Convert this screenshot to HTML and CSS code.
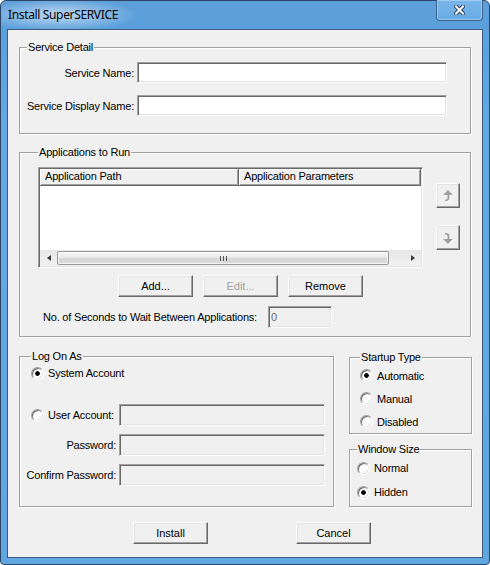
FILE: index.html
```html
<!DOCTYPE html>
<html lang="en">

<head>
    <meta charset="UTF-8">
    <title>Install SuperSERVICE</title>
    <link rel="stylesheet" href="styles.css">
</head>

<body>
    <div class="window">
        <div class="titlebar">
            <span class="title">Install SuperSERVICE</span>
            <button class="close-btn" title="Close">
                <svg width="11" height="10" viewBox="0 0 11 10">
                    <path d="M2 1.5 L9 8.5 M9 1.5 L2 8.5" stroke="#2b3f58" stroke-width="4" stroke-linecap="square" />
                    <path d="M2 1.5 L9 8.5 M9 1.5 L2 8.5" stroke="#fff" stroke-width="2" stroke-linecap="square" />
                </svg>
            </button>
        </div>

        <div class="client">
            <!-- Service name and display name -->
            <fieldset class="group group-detail">
                <legend>Service Detail</legend>
                <div class="detail-grid">
                    <label for="svc-name" class="field-label">Service Name:</label>
                    <input type="text" id="svc-name" class="edit">
                    <label for="svc-display" class="field-label">Service Display Name:</label>
                    <input type="text" id="svc-display" class="edit">
                </div>
            </fieldset>

            <!-- Application list -->
            <fieldset class="group group-apps">
                <legend>Applications to Run</legend>
                <div class="apps-row">
                    <div class="listview">
                        <div class="lv-header">
                            <span class="lv-col col-path">Application Path</span>
                            <span class="lv-col col-params">Application Parameters</span>
                        </div>
                        <div class="lv-body"></div>
                        <div class="hscroll">
                            <span class="sb-arrow sb-left"></span>
                            <span class="sb-track">
                                <span class="sb-thumb"><span class="sb-grip"></span></span>
                            </span>
                            <span class="sb-arrow sb-right"></span>
                        </div>
                    </div>
                    <div class="move-btns">
                        <button class="btn btn-move" disabled>
                            <svg width="14" height="14" viewBox="0 0 14 14">
                                <path transform="translate(1 1)" fill="#fff" d="M7 1 L12 6 L8.5 6 L8.5 9 Q8.5 12 5 12 L4 12 L4 10.5 L5 10.5 Q6.5 10.5 6.5 9 L6.5 6 L2 6 Z" />
                                <path fill="#a0a0a0" d="M7 1 L12 6 L8.5 6 L8.5 9 Q8.5 12 5 12 L4 12 L4 10.5 L5 10.5 Q6.5 10.5 6.5 9 L6.5 6 L2 6 Z" />
                            </svg>
                        </button>
                        <button class="btn btn-move" disabled>
                            <svg width="14" height="14" viewBox="0 0 14 14">
                                <path transform="translate(1 1)" fill="#fff" d="M7 13 L12 8 L8.5 8 L8.5 5 Q8.5 2 5 2 L4 2 L4 3.5 L5 3.5 Q6.5 3.5 6.5 5 L6.5 8 L2 8 Z" />
                                <path fill="#a0a0a0" d="M7 13 L12 8 L8.5 8 L8.5 5 Q8.5 2 5 2 L4 2 L4 3.5 L5 3.5 Q6.5 3.5 6.5 5 L6.5 8 L2 8 Z" />
                            </svg>
                        </button>
                    </div>
                </div>
                <div class="apps-actions">
                    <button class="btn">Add...</button>
                    <button class="btn" disabled>Edit...</button>
                    <button class="btn">Remove</button>
                </div>
                <div class="wait-row">
                    <label for="wait-secs" class="wait-label">No. of Seconds to Wait Between Applications:</label>
                    <input type="text" id="wait-secs" class="edit edit-wait" value="0" disabled>
                </div>
            </fieldset>

            <div class="bottom-grid">
                <!-- Account the service runs under -->
                <fieldset class="group group-logon">
                    <legend>Log On As</legend>
                    <label class="radio-row system-row">
                        <input type="radio" name="logon" class="radio" checked>
                        <span>System Account</span>
                    </label>
                    <div class="logon-grid">
                        <label class="radio-row">
                            <input type="radio" name="logon" class="radio">
                            <span>User Account:</span>
                        </label>
                        <input type="text" class="edit" disabled>
                        <label class="field-label">Password:</label>
                        <input type="password" class="edit" disabled>
                        <label class="field-label">Confirm Password:</label>
                        <input type="password" class="edit" disabled>
                    </div>
                </fieldset>

                <div class="side-col">
                    <fieldset class="group group-startup">
                        <legend>Startup Type</legend>
                        <label class="radio-row"><input type="radio" name="startup" class="radio" checked><span>Automatic</span></label>
                        <label class="radio-row"><input type="radio" name="startup" class="radio"><span>Manual</span></label>
                        <label class="radio-row"><input type="radio" name="startup" class="radio"><span>Disabled</span></label>
                    </fieldset>
                    <fieldset class="group group-winsize">
                        <legend>Window Size</legend>
                        <label class="radio-row"><input type="radio" name="winsize" class="radio"><span>Normal</span></label>
                        <label class="radio-row"><input type="radio" name="winsize" class="radio" checked><span>Hidden</span></label>
                    </fieldset>
                </div>
            </div>

            <div class="dialog-actions">
                <button class="btn">Install</button>
                <button class="btn">Cancel</button>
            </div>
        </div>
    </div>
</body>

</html>
```

FILE: styles.css
```css
* {
    box-sizing: border-box;
}

body {
    margin: 0;
    background-color: #FFFFFF;
    font-family: "Liberation Sans", Arial, sans-serif;
    font-size: 11px;
    letter-spacing: -0.2px;
    color: #000000;
}

/* window frame */
.window {
    width: 490px;
    height: 565px;
    border: 1px solid #2a4566;
    border-radius: 6px 6px 4px 4px;
    background: linear-gradient(to bottom, #5e9fd9 0, #5aa0dc 28px, #62a9e4 120px, #60a7e2 100%);
    padding: 0 6px 6px;
    display: flex;
    flex-direction: column;
}

.titlebar {
    height: 28px;
    display: flex;
    justify-content: space-between;
    align-items: flex-start;
    background: radial-gradient(ellipse 80px 16px at 58px 14px, rgba(255, 255, 255, 0.6), rgba(255, 255, 255, 0));
    margin: 0 -6px;
    padding: 0 0 0 7px;
}

.title {
    font-family: "Noto Sans", "Open Sans", sans-serif;
    font-size: 12px;
    letter-spacing: -0.35px;
    line-height: 16px;
    margin-top: 6px;
}

.close-btn {
    width: 47px;
    height: 21px;
    margin: -1px 6px 0 0;
    padding: 0;
    border: 1px solid #3d6288;
    border-top: none;
    border-radius: 0 0 4px 4px;
    background: linear-gradient(to bottom, #79b6ea, #68ace6);
    box-shadow: inset 0 0 0 1px rgba(255, 255, 255, 0.3);
    display: flex;
    align-items: center;
    justify-content: center;
}

.client {
    flex: 1;
    background-color: #F0F0F0;
    border: 1px solid #3c5a7c;
    padding: 10px 0 0 11px;
}

/* group boxes */
.group {
    margin: 0;
    min-inline-size: 0;
    border: 1px solid #a0a0a0;
    box-shadow: inset 1px 1px 0 #fff, 1px 1px 0 #fff;
}

.group legend {
    padding: 0 1px;
    margin-left: 0;
    line-height: 14px;
    background-color: #F0F0F0;
}

.edit {
    display: block;
    height: 22px;
    margin: 0;
    padding: 0 2px;
    font: inherit;
    color: #000;
    background-color: #FFFFFF;
    border: 1px solid;
    border-color: #a0a0a0 #fff #fff #a0a0a0;
    box-shadow: inset 1px 1px 0 #696969, inset -1px -1px 0 #e3e3e3;
    outline: none;
}

.edit:disabled {
    background-color: #F0F0F0;
    color: #6d6d6d;
}

.btn {
    width: 75px;
    height: 22px;
    padding: 0;
    font: inherit;
    color: #000;
    background-color: #F0F0F0;
    border: 1px solid;
    border-color: #fff #696969 #696969 #fff;
    box-shadow: inset -1px -1px 0 #a0a0a0, inset 1px 1px 0 #e3e3e3;
}

.btn:disabled {
    color: #a0a0a0;
}

/* right-aligned labels; long ones spill to the left */
.field-label {
    display: flex;
    justify-content: flex-end;
    white-space: nowrap;
}

.group-detail {
    width: 452px;
    padding: 8px 22px 17px 7px;
}

.detail-grid {
    display: grid;
    grid-template-columns: 107px 310px;
    column-gap: 3px;
    row-gap: 12px;
    align-items: center;
}

.detail-grid .edit {
    height: 21px;
}

/* application list */
.group-apps {
    width: 452px;
    margin-top: 11px;
    padding: 8px 9px 8px 18px;
}

.apps-row {
    display: flex;
    gap: 13px;
}

.listview {
    width: 385px;
    height: 101px;
    padding: 1px;
    display: flex;
    flex-direction: column;
    background-color: #FFFFFF;
    border: 1px solid;
    border-color: #a0a0a0 #fff #fff #a0a0a0;
    box-shadow: inset 1px 1px 0 #696969, inset -1px -1px 0 #e3e3e3;
}

.lv-header {
    display: flex;
    height: 17px;
}

.lv-col {
    height: 17px;
    line-height: 15px;
    padding-left: 5px;
    white-space: nowrap;
    background-color: #F0F0F0;
    border-right: 1px solid #696969;
    border-bottom: 1px solid #696969;
    box-shadow: inset 1px 1px 0 #fff, inset -1px -1px 0 #a0a0a0;
}

.col-path {
    width: 199px;
}

.col-params {
    flex: 1;
}

.lv-body {
    flex: 1;
}

.hscroll {
    display: flex;
    height: 16px;
    background: linear-gradient(to bottom, #e6e6e6, #f2f2f2);
}

.sb-arrow {
    width: 17px;
    display: flex;
    align-items: center;
    justify-content: center;
}

.sb-arrow::before {
    content: "";
    border-top: 3.5px solid transparent;
    border-bottom: 3.5px solid transparent;
}

.sb-left::before {
    border-right: 4px solid #3a3a3a;
}

.sb-right::before {
    border-left: 4px solid #3a3a3a;
}

.sb-track {
    flex: 1;
    display: flex;
    padding: 1px 0;
}

.sb-thumb {
    width: 332px;
    border: 1px solid #989898;
    border-radius: 2px;
    background: linear-gradient(to bottom, #f7f7f7, #e8e8e8 50%, #d6d6d6 51%, #dcdcdc);
    box-shadow: inset 0 0 0 1px rgba(255, 255, 255, 0.6);
    display: flex;
    align-items: center;
    justify-content: center;
}

.sb-grip {
    width: 7px;
    height: 5px;
    background: repeating-linear-gradient(to right, #555 0 1px, transparent 1px 3px);
}

.move-btns {
    display: flex;
    flex-direction: column;
    gap: 17px;
    padding-top: 16px;
}

.btn-move {
    width: 24px;
    height: 25px;
    display: flex;
    align-items: center;
    justify-content: center;
}

.apps-actions {
    display: flex;
    gap: 10px;
    margin: 7px 0 0 80px;
}

.wait-row {
    display: flex;
    align-items: center;
    gap: 5px;
    margin: 9px 0 0 5px;
}

.wait-label {
    width: 220px;
    flex: none;
    white-space: nowrap;
}

.edit-wait {
    width: 64px;
}

/* radios */
.radio {
    appearance: none;
    width: 13px;
    height: 13px;
    margin: 0;
    flex: none;
    border-radius: 50%;
    border: 1px solid;
    border-color: #a0a0a0 #fff #fff #a0a0a0;
    box-shadow: inset 1px 1px 0 #696969, inset -1px -1px 0 #e3e3e3;
    background-color: #FFFFFF;
}

.radio:checked {
    background: radial-gradient(circle, #000 0 2px, #fff 2.6px);
}

.radio-row {
    display: flex;
    align-items: center;
    gap: 4px;
    white-space: nowrap;
}

/* bottom section */
.bottom-grid {
    display: flex;
    gap: 15px;
    margin-top: 12px;
}

.group-logon {
    width: 315px;
    padding: 1px 7px 19px 11px;
}

.system-row {
    height: 18px;
}

.logon-grid {
    display: grid;
    grid-template-columns: 85px 206px;
    column-gap: 3px;
    row-gap: 8px;
    align-items: center;
    margin-top: 22px;
}

.side-col {
    display: flex;
    flex-direction: column;
    gap: 8px;
    margin-top: 1px;
}

.group-startup {
    width: 123px;
    padding: 0 4px 0 10px;
}

.group-startup .radio-row {
    height: 23px;
}

.group-winsize {
    width: 123px;
    padding: 0 4px 2px 7px;
}

.group-winsize .radio-row {
    height: 24px;
}

.dialog-actions {
    display: flex;
    gap: 88px;
    margin: 15px 0 0 114px;
}
```
